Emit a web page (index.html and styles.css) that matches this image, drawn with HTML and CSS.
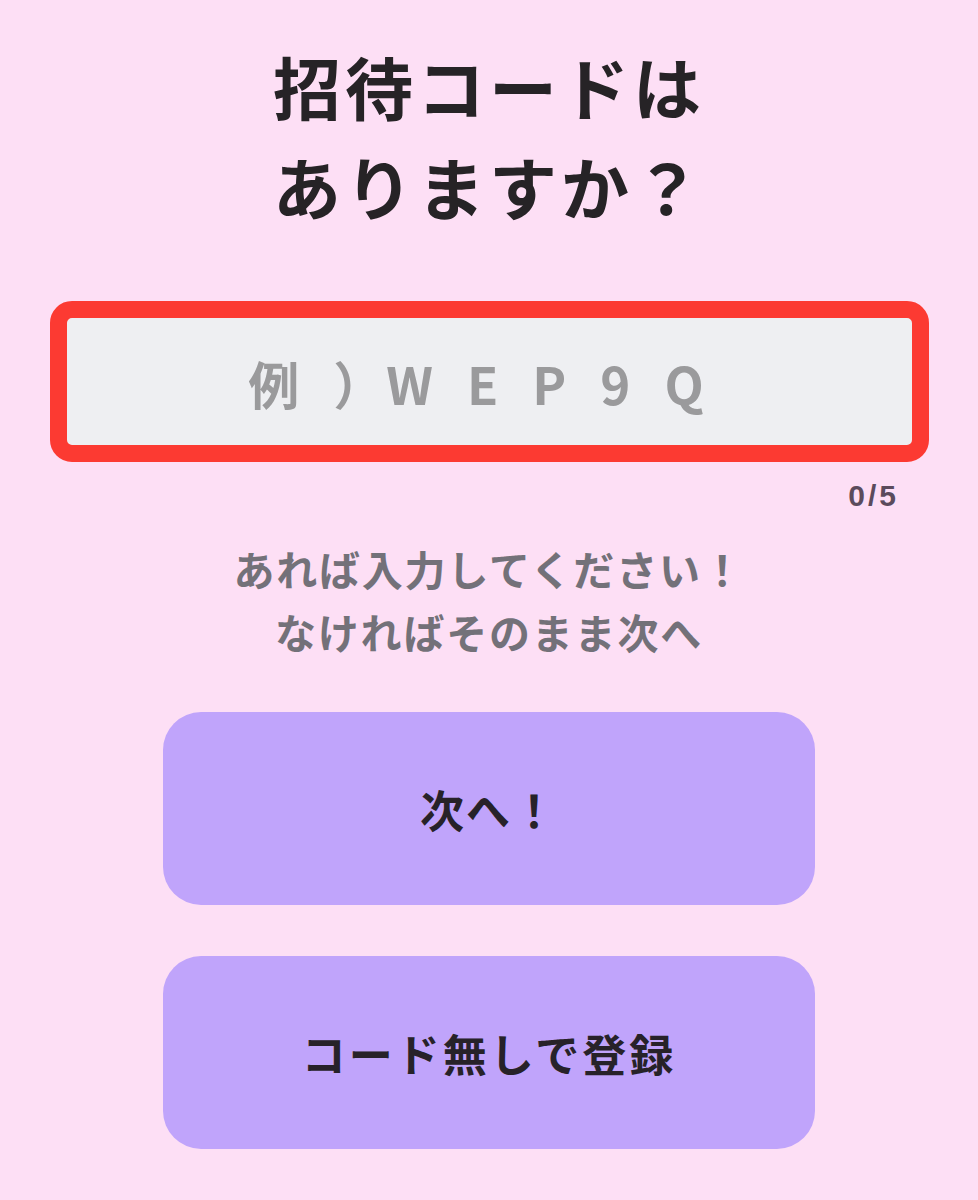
FILE: index.html
```html
<!DOCTYPE html>
<html lang="ja">
<head>
<meta charset="utf-8">
<title>招待コード</title>
<link rel="stylesheet" href="styles.css">
</head>
<body>
<main class="screen">
  <h1 class="title">招待コードは<br>ありますか？</h1>
  <div class="code-field">
    <span class="placeholder">例<span class="paren">）</span>WEP9Q</span>
  </div>
  <div class="counter">0/5</div>
  <p class="hint">あれば入力してください！<br>なければそのまま次へ</p>
  <div class="actions">
    <button class="btn">次へ！</button>
    <button class="btn btn-wide">コード無しで登録</button>
  </div>
</main>
</body>
</html>
```

FILE: styles.css
```css
html, body {
  margin: 0;
  padding: 0;
  background: #fddff5;
}
body {
  font-family: "Noto Sans CJK JP", "Noto Sans", sans-serif;
}
.screen {
  width: 978px;
  height: 1200px;
  display: flex;
  flex-direction: column;
  align-items: center;
  overflow: hidden;
}
.title {
  margin: 36px 0 0;
  font-size: 68px;
  line-height: 100px;
  font-weight: 700;
  letter-spacing: 4px;
  color: #262326;
  text-align: center;
}
.code-field {
  margin-top: 65px;
  box-sizing: border-box;
  width: 879px;
  height: 161px;
  border: 17px solid #fc3a32;
  border-radius: 22px;
  background: #eeeff2;
  display: flex;
  align-items: center;
  justify-content: center;
}
.placeholder {
  font-size: 51px;
  font-weight: 700;
  color: #9a9a9c;
  letter-spacing: 34px;
  margin-left: 8px;
  margin-top: 2px;
}
.paren {
  letter-spacing: 2px;
}
.counter {
  align-self: flex-end;
  margin: 17px 79px 0 0;
  font-family: "Liberation Sans", Arial, sans-serif;
  font-weight: 700;
  font-size: 30px;
  line-height: 34px;
  letter-spacing: 3px;
  color: #5b4b5c;
}
.hint {
  margin: 24px 0 0;
  font-size: 41px;
  line-height: 63px;
  font-weight: 700;
  letter-spacing: 1.8px;
  color: #737179;
  text-align: center;
}
.actions {
  margin-top: 49px;
  display: flex;
  flex-direction: column;
  gap: 51px;
}
.btn {
  width: 652px;
  height: 193px;
  border: none;
  border-radius: 38px;
  background: #c0a4fb;
  color: #272229;
  font-family: "Noto Sans CJK JP", "Noto Sans", sans-serif;
  font-size: 44px;
  font-weight: 700;
  letter-spacing: 2px;
  padding: 0;
}
.btn-wide {
  letter-spacing: 3px;
}
```
